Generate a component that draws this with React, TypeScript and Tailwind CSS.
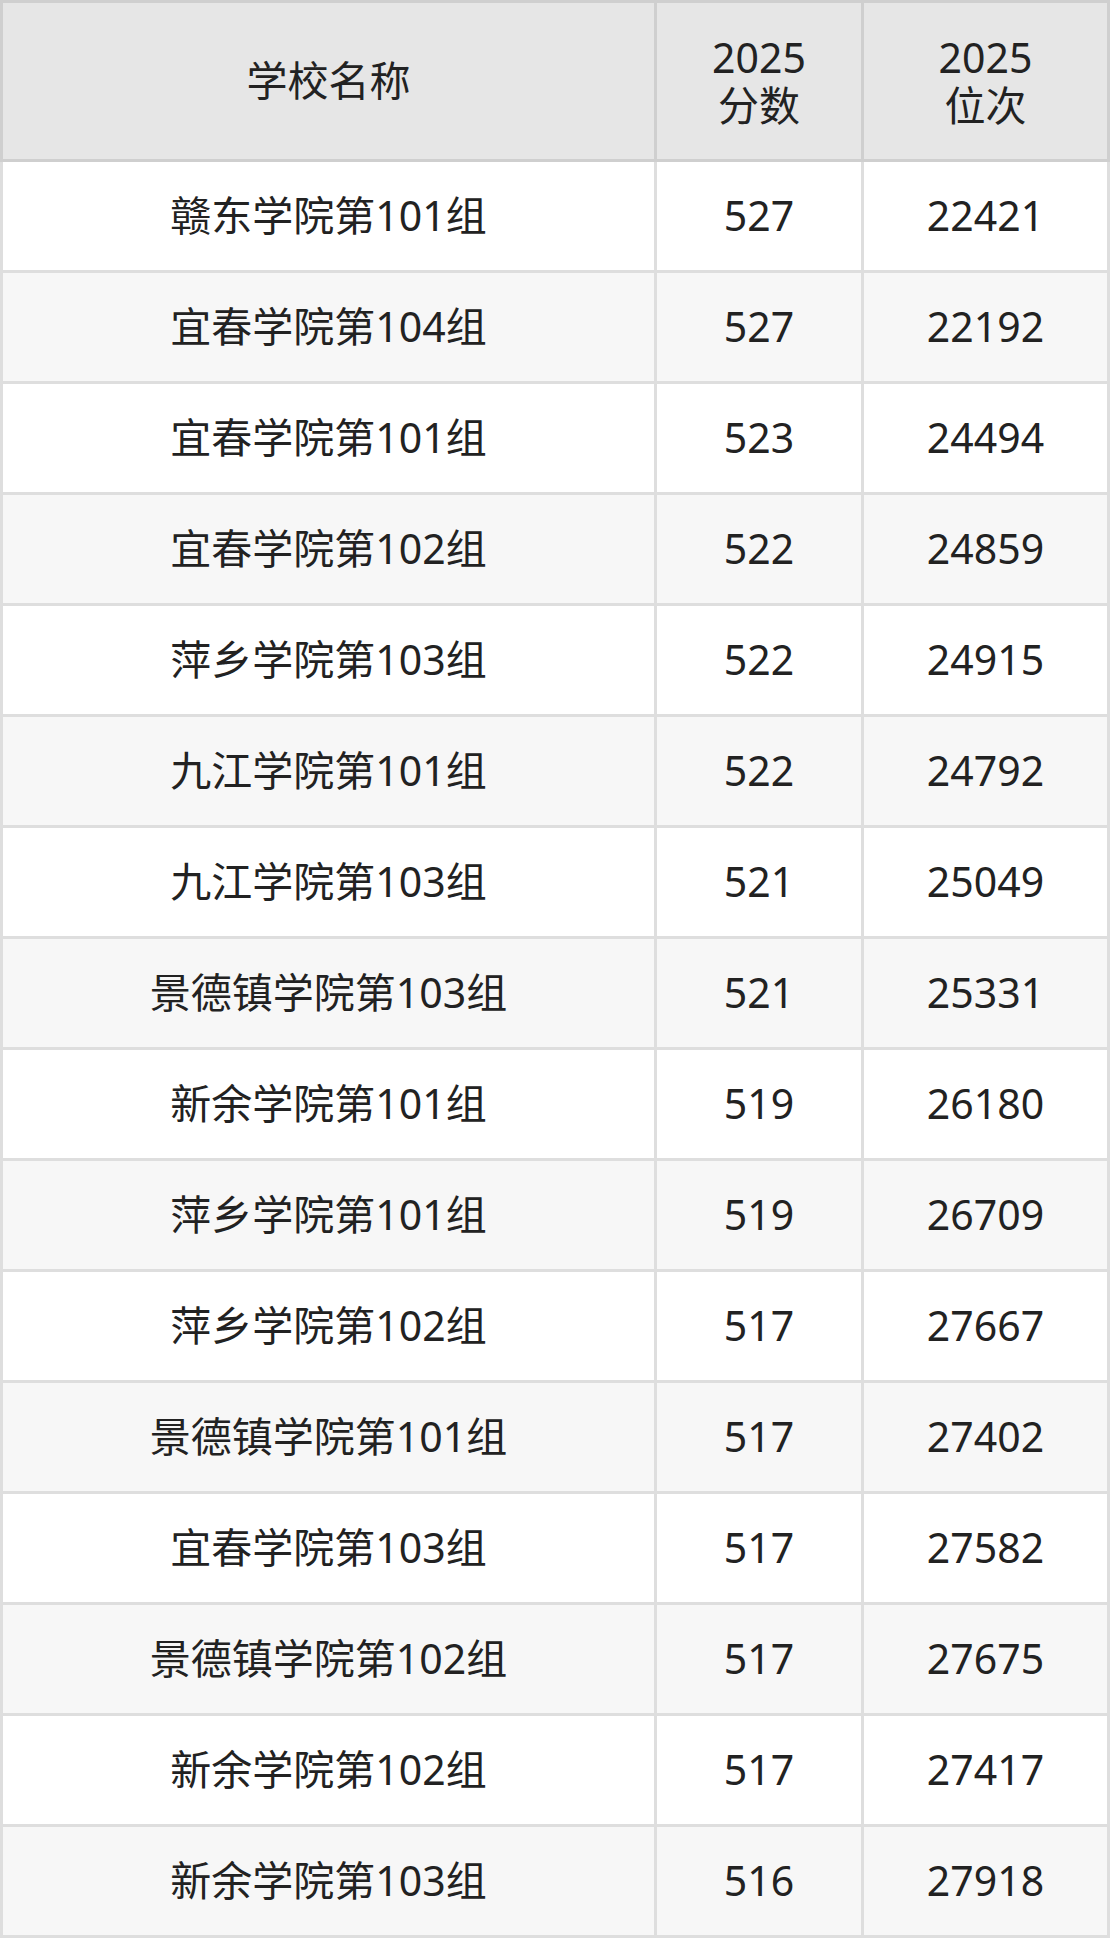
const rows: [string, string, string][] = [
  ["赣东学院第101组", "527", "22421"],
  ["宜春学院第104组", "527", "22192"],
  ["宜春学院第101组", "523", "24494"],
  ["宜春学院第102组", "522", "24859"],
  ["萍乡学院第103组", "522", "24915"],
  ["九江学院第101组", "522", "24792"],
  ["九江学院第103组", "521", "25049"],
  ["景德镇学院第103组", "521", "25331"],
  ["新余学院第101组", "519", "26180"],
  ["萍乡学院第101组", "519", "26709"],
  ["萍乡学院第102组", "517", "27667"],
  ["景德镇学院第101组", "517", "27402"],
  ["宜春学院第103组", "517", "27582"],
  ["景德镇学院第102组", "517", "27675"],
  ["新余学院第102组", "517", "27417"],
  ["新余学院第103组", "516", "27918"],
];

const font = { fontFamily: '"Noto Sans", "Noto Sans CJK SC", sans-serif' };

export default function App() {
  return (
    <div className="w-[1110px] text-[41px] text-[#222]" style={font}>
      {/* header */}
      <div className="grid grid-cols-[651px_204px_243px] gap-[3px] bg-[#cfcfcf] p-[3px]">
        <div className="h-[156px] bg-[#e6e6e6] flex items-center justify-center">学校名称</div>
        <div className="h-[156px] bg-[#e6e6e6] flex flex-col items-center justify-center leading-[48px]">
          <span>2025</span>
          <span>分数</span>
        </div>
        <div className="h-[156px] bg-[#e6e6e6] flex flex-col items-center justify-center leading-[48px]">
          <span>2025</span>
          <span>位次</span>
        </div>
      </div>
      {/* body */}
      <div className="grid grid-cols-[651px_204px_243px] gap-[3px] bg-[#dedede] px-[3px] pb-[3px]">
        {rows.map((r, i) => {
          const bg = i % 2 === 0 ? "bg-white" : "bg-[#f7f7f7]";
          return r.map((c, j) => (
            <div key={`${i}-${j}`} className={`h-[108px] flex items-center justify-center ${bg}`}>
              {c}
            </div>
          ));
        })}
      </div>
    </div>
  );
}
